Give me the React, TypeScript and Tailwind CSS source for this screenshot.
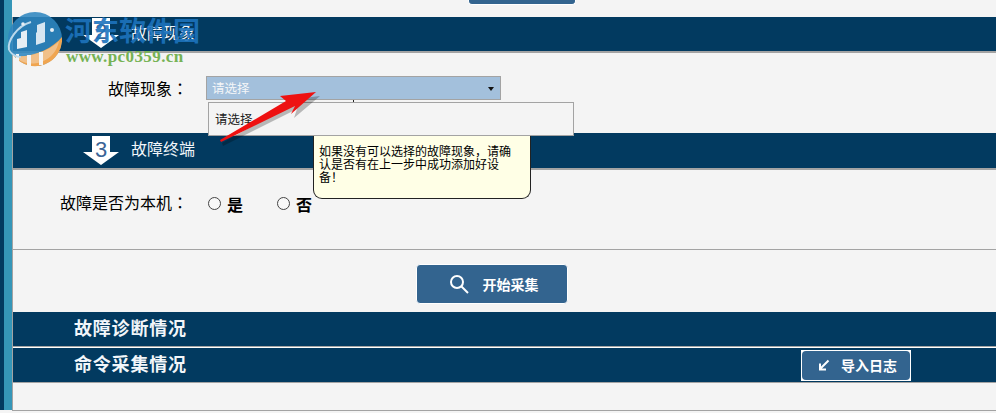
const cjk = { fontFamily: '"Noto Sans CJK SC", "Liberation Sans", sans-serif' };

function StepArrow({ n, offset, height }: { n: string; offset: string; height: number }) {
  const wing = height - 13;
  return (
    <div className={`relative w-[36px] ml-[70px] ${offset}`} style={{ height }}>
      <svg width="36" height={height} viewBox={`0 0 36 ${height}`} className="absolute inset-0">
        <polygon points={`9,0 27,0 27,${wing} 36,${wing} 18,${height} 0,${wing} 9,${wing}`} fill="#ffffff" />
      </svg>
      <span className="absolute left-0 right-0 top-[2px] text-center text-[22px] leading-[24px] text-[#3a6496]" style={{ fontFamily: '"Liberation Sans", sans-serif' }}>
        {n}
      </span>
    </div>
  );
}

function Radio({ label }: { label: string }) {
  return (
    <div className="flex items-center">
      <span className="w-[13px] h-[13px] rounded-full border border-[#444444] bg-[#f8f8f8]" />
      <span className="ml-[6px] mt-[2px] text-[16px] leading-[20px] font-bold text-black">{label}</span>
    </div>
  );
}

function Colon() {
  return <span className="font-['Noto_Sans_CJK_TC']">：</span>;
}

export default function App() {
  return (
    <div className="relative w-[996px] h-[413px] overflow-hidden bg-[#f4f4f4] flex" style={cjk}>
      <div className="flex h-[410px] shrink-0">
        <div className="w-[4px] bg-[#023a60]" />
        <div className="w-[8px] bg-[#3596b8]" />
      </div>
      <main className="flex-1 min-w-0 flex flex-col">
        <div className="h-[17px] flex justify-center shrink-0">
          <div className="w-[108px] h-[5px] ml-[36px] bg-[#33648f] rounded-b-[4px] border-b border-x border-white box-border" />
        </div>

        <div className="border-l border-b border-[#a3a3a3] flex flex-col h-[394px]">
          <div className="h-[36px] bg-[#023a60] flex items-start border-b-[2px] border-[#a3a3a3]">
            <StepArrow n="2" offset="mt-[1px]" height={30} />
            <span className="ml-[12px] mt-[5px] text-[16px] leading-[20px] text-[#f2f6fa]">故障现象</span>
          </div>
          <div className="h-[80px] flex items-start">
            <span className="ml-[95px] mt-[24px] w-[98px] text-[16px] leading-[22px] text-black">故障现象<Colon /></span>
            <div className="mt-[23px] w-[295px] h-[24px] bg-[#a3c0dc] border border-[#a3a3a3] flex items-center justify-between pl-[5px] pr-[6px]">
              <span className="text-[12.5px] mt-[1px] text-[#f4f6f8]">请选择</span>
              <svg width="6" height="4" viewBox="0 0 6 4" className="mt-[2px]">
                <polygon points="0,0 6,0 3,4" fill="#111111" />
              </svg>
            </div>
          </div>
          <div className="h-[37px] bg-[#023a60] flex items-start border-b-[2px] border-[#a3a3a3]">
            <StepArrow n="3" offset="mt-[3px]" height={29} />
            <span className="ml-[12px] mt-[5px] text-[16px] leading-[20px] text-[#f2f6fa]">故障终端</span>
          </div>
          <div className="h-[80px] border-b border-[#a3a3a3] flex items-start">
            <span className="ml-[47px] mt-[21px] w-[148px] text-[16px] leading-[22px] text-black">故障是否为本机<Colon /></span>
            <div className="mt-[22px] flex gap-[34px]">
              <Radio label="是" />
              <Radio label="否" />
            </div>
          </div>
          <div className="h-[62px] flex justify-center items-start pt-[14px]">
            <button className="w-[152px] h-[40px] rounded-[4px] bg-[#33648f] border border-white text-white flex items-center justify-center gap-[14px] pl-[4px] ml-[-26px]">
              <svg width="20" height="20" viewBox="0 0 20 20" fill="none" stroke="#ffffff" strokeWidth="2">
                <circle cx="8" cy="8" r="6" />
                <path d="M12.5 12.5 L19 19" />
              </svg>
              <span className="text-[14px] font-bold">开始采集</span>
            </button>
          </div>
          <div className="h-[35px] bg-[#023a60] border-b border-[#a3a3a3] flex items-center pb-[3px]">
            <span className="ml-[61px] text-[18px] tracking-[0.8px] font-bold text-[#f2f6fa]">故障诊断情况</span>
          </div>
          <div className="h-[1px] bg-white" />
          <div className="h-[35px] bg-[#023a60] border-b border-[#a3a3a3] flex items-center justify-between">
            <span className="ml-[61px] mb-[3px] text-[18px] tracking-[0.8px] font-bold text-[#f2f6fa]">命令采集情况</span>
            <div className="mr-[85px] w-[110px] h-[31px] bg-white p-[1px]">
              <button className="w-full h-full rounded-[4px] bg-[#33648f] text-white flex items-center justify-center gap-[11px] pl-[3px]">
                <svg width="12" height="12" viewBox="0 0 12 12" fill="none" stroke="#ffffff" strokeWidth="2">
                  <path d="M10.5 1.5 L2 10 M2 4.5 V10.5 H8" />
                </svg>
                <span className="text-[14px] font-bold">导入日志</span>
              </button>
            </div>
          </div>
          <div className="flex-1" />
        </div>
      </main>

      {/* Dropdown list */}
      <div className="absolute left-[208px] top-[102px] w-[366px] h-[34px] bg-[#f4f4f4] border border-[#a3a3a3] flex items-center pl-[6px] text-[12.5px] text-[#222222]">
        请选择
      </div>

      {/* Tooltip */}
      <div className="absolute left-[353px] top-[100px] w-[1px] h-[2px] bg-[#222222]" />
      <div className="absolute left-[313px] top-[136px] w-[218px] h-[63px] bg-[#ffffe6] border border-[#222222] border-t-0 rounded-b-[9px] pl-[5px] pr-[16px] pt-[8px] text-[12px] leading-[13px] text-black">
        如果没有可以选择的故障现象，请确认是否有在上一步中成功添加好设备！
      </div>

      {/* Annotation arrow */}
      <svg width="130" height="70" viewBox="0 0 130 70" className="absolute left-[210px] top-[84px]">
        <polygon points="11,59 85,22 82,31 108,9 74,13 78,18 10,56" fill="#000000" opacity="0.25" transform="translate(2,3)" />
        <polygon points="11,58 85,22 81,30 106,8 70,12 76,17 10,56" fill="#ee1111" />
      </svg>

      {/* Watermark */}
      <div className="absolute left-[6px] top-[11px] w-[56px] h-[56px]">
        <svg width="56" height="56" viewBox="0 0 56 56">
          <circle cx="29" cy="28" r="27" fill="#2f86bf" opacity="0.88" />
          <path d="M56 26 A27 27 0 0 1 8 45 C26 47 46 38 56 26 Z" fill="#f0a550" />
          <path d="M8 45 C26 47 46 38 53 30 A27 27 0 0 1 10 47 Z" fill="#f4f4f4" opacity="0.35" />
          <rect x="21" y="44" width="4" height="11" fill="#f4f4f4" />
          <rect x="33" y="41" width="4" height="13" fill="#f4f4f4" />
          <rect x="10" y="43" width="3" height="7" fill="#f4f4f4" />
          <polygon points="15,21 21,19 21,36 11,38 11,28 15,27" fill="#e6eef4" />
          <polygon points="31,14 39,11 39,31 30,34 30,22 31,21" fill="#d6e6f1" />
          <path d="M3 39 C1 30 11 15 25 11" fill="none" stroke="#bcd9ec" strokeWidth="2" />
          <path d="M3 39 C6 44 10 46 15 46" fill="none" stroke="#bcd9ec" strokeWidth="1.5" />
          <circle cx="17" cy="13" r="1.8" fill="#e6eef4" />
          <circle cx="46" cy="19" r="2" fill="#e6eef4" />
        </svg>
      </div>
      <div className="absolute left-[65px] top-[12px] text-[27px] leading-[36px] font-bold text-[#1d73bd] opacity-90">河东软件园</div>
      <div className="absolute left-[66px] top-[47px] text-[17px] leading-[20px] font-bold text-[#76b254] tracking-[0.4px]" style={{ fontFamily: '"Liberation Serif", serif' }}>
        www.pc0359.cn
      </div>
    </div>
  );
}
